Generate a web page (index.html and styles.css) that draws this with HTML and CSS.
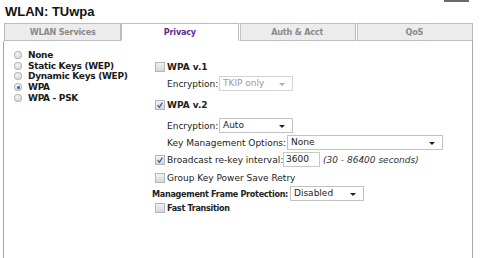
FILE: index.html
```html
<!DOCTYPE html>
<html lang="en">
<head>
  <meta charset="UTF-8">
  <title>WLAN: TUwpa</title>
  <link rel="stylesheet" href="styles.css">
</head>
<body>
  <div class="topbar"><span class="corner"></span></div>
  <h1>WLAN: TUwpa</h1>

  <div class="tabs">
    <div class="tab">WLAN Services</div>
    <div class="tab active">Privacy</div>
    <div class="tab">Auth &amp; Acct</div>
    <div class="tab">QoS</div>
  </div>

  <div class="panel">
    <div class="modes">
      <label class="radio-row"><span class="radio"></span>None</label>
      <label class="radio-row"><span class="radio"></span>Static Keys (WEP)</label>
      <label class="radio-row"><span class="radio"></span>Dynamic Keys (WEP)</label>
      <label class="radio-row"><span class="radio on"></span>WPA</label>
      <label class="radio-row"><span class="radio"></span>WPA - PSK</label>
    </div>

    <div class="options">
      <div class="row check-row v1">
        <span class="check"></span><b>WPA v.1</b>
      </div>
      <div class="row sub enc1">
        <span class="label w-enc">Encryption:</span>
        <div class="select disabled enc-select">TKIP only<span class="arrow"></span></div>
      </div>

      <div class="row check-row v2">
        <span class="check on"><svg viewBox="0 0 9 9"><path d="M1.8 4.6 L3.8 7 L7.2 1.8" /></svg></span><b>WPA v.2</b>
      </div>
      <div class="row sub enc2">
        <span class="label w-enc">Encryption:</span>
        <div class="select enc-select">Auto<span class="arrow"></span></div>
      </div>
      <div class="row sub keymgmt">
        <span class="label w-key">Key Management Options:</span>
        <div class="select key-select">None<span class="arrow"></span></div>
      </div>
      <div class="row check-row rekey">
        <span class="check on"><svg viewBox="0 0 9 9"><path d="M1.8 4.6 L3.8 7 L7.2 1.8" /></svg></span>
        <span class="label w-rekey">Broadcast re-key interval:</span>
        <div class="input">3600</div>
        <i class="hint">(30 - 86400 seconds)</i>
      </div>
      <div class="row check-row group">
        <span class="check"></span>Group Key Power Save Retry
      </div>
      <div class="row mfp">
        <b class="label w-mfp tight">Management Frame Protection:</b>
        <div class="select mfp-select">Disabled<span class="arrow"></span></div>
      </div>
      <div class="row check-row fast">
        <span class="check"></span><b class="tight">Fast Transition</b>
      </div>
    </div>
  </div>
</body>
</html>
```

FILE: styles.css
```css
body {
  margin: 0;
  font-family: "DejaVu Sans", Verdana, sans-serif;
  font-size: 9px;
  color: #222;
  background: #fff;
}
b {
  font-weight: bold;
}
.tight {
  font-stretch: condensed;
  letter-spacing: -0.3px;
}
.topbar {
  height: 3px;
  position: relative;
}
.corner {
  position: absolute;
  left: 444px;
  top: 0;
  width: 25px;
  height: 2px;
  background: #6a6a6a;
}
h1 {
  margin: 1px 0 0 5px;
  font-family: "Liberation Sans", Arial, sans-serif;
  font-size: 13px;
  font-weight: bold;
  color: #111;
  height: 19px;
  line-height: 15px;
}
.tabs {
  display: flex;
  margin-left: 4px;
  width: 469px;
}
.tab {
  flex: 1;
  height: 16px;
  line-height: 16px;
  text-align: center;
  font-weight: bold;
  font-stretch: condensed;
  letter-spacing: -0.2px;
  color: #8a8a8a;
  background: #ececec;
  border: 1px solid #bcbcbc;
  border-left: 1px solid #fff;
  box-shadow: inset 1px 0 0 #c4c4c4;
}
.tab:first-child {
  box-shadow: none;
  border-left-color: #bcbcbc;
}
.tab.active {
  background: #fff;
  color: #5b2d90;
  border-bottom-color: #fff;
  box-shadow: none;
  border-left-color: #bcbcbc;
}
.panel {
  display: flex;
  margin-left: 3px;
  width: 468px;
  height: 217px;
  border-left: 1px solid #a8a8a8;
  border-right: 1px solid #a8a8a8;
}
.modes {
  width: 138px;
  padding: 9px 0 0 10px;
  display: flex;
  flex-direction: column;
}
.radio-row {
  display: flex;
  align-items: center;
  height: 10.6px;
  font-weight: bold;
  letter-spacing: -0.3px;
  color: #1a1a1a;
}
.radio {
  width: 8px;
  height: 8px;
  border-radius: 50%;
  margin-right: 6px;
  background: radial-gradient(circle at 40% 35%, #f4f4f4, #c9c9c9);
  box-shadow: inset 0 0 0 1px #bdbdbd;
  position: relative;
}
.radio.on::after {
  content: "";
  position: absolute;
  left: 2.5px;
  top: 2.5px;
  width: 3px;
  height: 3px;
  border-radius: 50%;
  background: #2a5cb0;
}
.options {
  display: flex;
  flex-direction: column;
}
.row {
  display: flex;
  align-items: center;
  white-space: nowrap;
}
.check-row {
  height: 14px;
}
.sub {
  padding-left: 15px;
}
.check {
  width: 8px;
  height: 8px;
  border: 1px solid #b6b6b6;
  background: linear-gradient(#f2f2f2, #d6d6d6);
  margin: 0 2px 0 3px;
  display: inline-flex;
}
.check svg {
  width: 8px;
  height: 8px;
}
.check path {
  fill: none;
  stroke: #2b5ea8;
  stroke-width: 1.4;
}
.w-enc { width: 52px; }
.w-key { width: 120px; }
.w-rekey { width: 116px; }
.w-mfp { width: 138px; flex-shrink: 0; }
.select {
  position: relative;
  height: 13px;
  line-height: 13px;
  border: 1px solid #c2c2c2;
  background: #fff;
  padding-left: 3px;
}
.select.disabled {
  color: #999;
  border-color: #d4d4d4;
}
.arrow {
  position: absolute;
  right: 7px;
  top: 6px;
  border-left: 3px solid transparent;
  border-right: 3px solid transparent;
  border-top: 3px solid #222;
}
.select.disabled .arrow {
  border-top-color: #aaa;
}
.enc-select { width: 69px; }
.key-select { width: 151px; }
.mfp-select { width: 69px; }
.input {
  height: 13px;
  line-height: 13px;
  width: 33px;
  padding-left: 2px;
  border: 1px solid #c8c8c8;
}
.hint {
  margin-left: 3px;
  color: #333;
}
.v1 { margin-top: 19px; }
.enc1 { margin-top: 2px; height: 15px; }
.v2 { margin-top: 7px; }
.enc2 { margin-top: 6px; height: 15px; }
.keymgmt { margin-top: 2px; height: 15px; }
.rekey { margin-top: 2px; height: 15px; }
.group { margin-top: 4px; }
.mfp { margin-top: 1px; height: 15px; }
.fast { margin-top: 0; }
```
